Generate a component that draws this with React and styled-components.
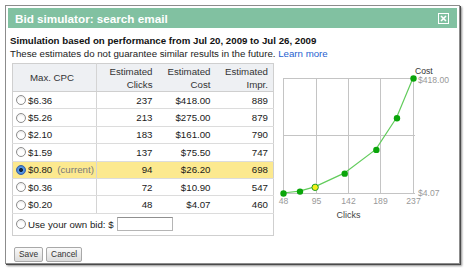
import React from "react";
import styled, { createGlobalStyle } from "styled-components";

const GlobalStyle = createGlobalStyle`
  body {
    margin: 0;
    background: #fff;
    font-family: "Liberation Sans", Arial, sans-serif;
    color: #222;
  }
`;

const Dialog = styled.div`
  box-sizing: border-box;
  margin: 5px;
  width: 455px;
  height: 259px;
  padding: 2px;
  background: #fff;
  border: 1px solid #8c8c8c;
  box-shadow: 1px 1px 0 #4a4a4a, 2px 2px 2px rgba(0, 0, 0, 0.45);
`;

const TitleBar = styled.div`
  display: flex;
  align-items: center;
  justify-content: space-between;
  height: 20px;
  padding: 0 8px 0 7px;
  background: #81c1a1;
`;

const Title = styled.span`
  color: #fff;
  font-weight: bold;
  font-size: 11.7px;
`;

const Body = styled.div`
  padding: 6px 0 0 2px;
`;

const Heading = styled.div`
  font-size: 9.7px;
  font-weight: bold;
  line-height: 13px;
  color: #111;
`;

const Note = styled.div`
  font-size: 9.7px;
  line-height: 13px;
  color: #222;
`;

const Link = styled.a`
  color: #1f5fcf;
  text-decoration: none;
`;

const Content = styled.div`
  display: flex;
  align-items: flex-start;
  margin: 3px 0 0 2px;
`;

const SimTable = styled.table`
  border-collapse: collapse;
  table-layout: fixed;
  width: 261px;
  font-size: 9.7px;
  border: 1px solid #cfcfcf;
`;

const HeadCell = styled.th`
  height: 27px;
  padding: 0 5px 0 0;
  font-weight: normal;
  line-height: 13px;
  color: #333;
  background: #eef0f3;
  text-align: ${(p) => (p.$center ? "center" : "right")};
  border-bottom: 1px solid #cfcfcf;
  border-right: ${(p) => (p.$split ? "1px solid #d4d4d4" : "none")};
`;

const Row = styled.tr`
  background: ${(p) => (p.$current ? "#fce98f" : "#fff")};
`;

const Cell = styled.td`
  height: 16.4px;
  padding: 0 5px 0 0;
  text-align: right;
  color: #1a1a1a;
  border-bottom: 1px solid #dcdcdc;
  border-right: ${(p) => (p.$split ? "1px solid #d4d4d4" : "none")};
`;

const BidCell = styled.td`
  height: 16.4px;
  padding: 0 0 0 3px;
  border-bottom: 1px solid #dcdcdc;
  border-right: 1px solid #d4d4d4;
`;

const OwnCell = styled.td`
  height: 21px;
  padding: 0 0 0 3px;
`;

const Choice = styled.label`
  display: flex;
  align-items: center;
  gap: 2px;
  color: #1a1a1a;
  white-space: nowrap;
`;

const Radio = styled.span`
  box-sizing: border-box;
  width: 10px;
  height: 10px;
  border-radius: 50%;
  border: 1px solid ${(p) => (p.$checked ? "#3a64a8" : "#8e8e8e")};
  background: ${(p) =>
    p.$checked
      ? "radial-gradient(circle, #10213c 0 1.6px, #5b9be6 2.4px, #2f6bc4 100%)"
      : "radial-gradient(circle at 50% 70%, #fff 0 40%, #e2e2e2 100%)"};
  flex: none;
`;

const Muted = styled.span`
  color: #7a7a7a;
  margin-left: 3px;
`;

const BidInput = styled.span`
  display: inline-block;
  box-sizing: border-box;
  width: 56px;
  height: 14px;
  margin-left: 1px;
  border: 1px solid #b5b5b5;
  border-top-color: #8f8f8f;
  background: #fff;
`;

const Actions = styled.div`
  display: flex;
  gap: 3px;
  margin: 11px 0 0 4px;
`;

const Button = styled.button`
  box-sizing: border-box;
  height: 15px;
  padding: 0 4px;
  font-family: "Liberation Sans", Arial, sans-serif;
  font-size: 8.4px;
  color: #333;
  border: 1px solid #a8a8a8;
  border-radius: 2px;
  background: linear-gradient(#fafafa, #dcdcdc);
`;

const rows = [
  { bid: "$6.36", clicks: 237, cost: "$418.00", impr: 889 },
  { bid: "$5.26", clicks: 213, cost: "$275.00", impr: 879 },
  { bid: "$2.10", clicks: 183, cost: "$161.00", impr: 790 },
  { bid: "$1.59", clicks: 137, cost: "$75.50", impr: 747 },
  { bid: "$0.80", clicks: 94, cost: "$26.20", impr: 698, current: true },
  { bid: "$0.36", clicks: 72, cost: "$10.90", impr: 547 },
  { bid: "$0.20", clicks: 48, cost: "$4.07", impr: 460 },
];

const points = [
  [48, 4.07],
  [72, 10.9],
  [94, 26.2, true],
  [137, 75.5],
  [183, 161],
  [213, 275],
  [237, 418],
];

const px = (c) => 9 + ((c - 48) * 130) / 189;
const py = (v) => 130 - ((v - 4.07) * 115) / 413.93;

const CloseIcon = () => (
  <svg width="11" height="11" viewBox="0 0 11 11">
    <rect x="0.5" y="0.5" width="10" height="10" fill="none" stroke="#fff" />
    <path d="M3 3 L8 8 M8 3 L3 8" stroke="#fff" strokeWidth="1.6" />
  </svg>
);

const Chart = () => {
  const grid = [9, 42, 74, 106, 139];
  const labels = ["48", "95", "142", "189", "237"];
  const line = points.map(([c, v]) => `${px(c)},${py(v)}`).join(" ");
  return (
    <svg width="182" height="160" style={{ flex: "none" }}>
      <g stroke="#c4c4c4" strokeWidth="1">
        {grid.map((x) => (
          <line key={x} x1={x + 0.5} y1="15" x2={x + 0.5} y2="130.5" />
        ))}
        <line x1="9" y1="15.5" x2="140" y2="15.5" />
        <line x1="9" y1="72.5" x2="141" y2="72.5" />
        <line x1="9" y1="130.5" x2="141" y2="130.5" />
      </g>
      <polyline points={line} fill="none" stroke="#62cc5c" strokeWidth="1.2" />
      {points.map(([c, v, cur]) => (
        <circle
          key={c}
          cx={px(c) + 0.5}
          cy={py(v) + 0.5}
          r="3.2"
          fill={cur ? "#f5ee1a" : "#0aa50a"}
          stroke={cur ? "#1e9e1e" : "none"}
          strokeWidth="1"
        />
      ))}
      <g fontFamily="Liberation Sans, Arial, sans-serif" fontSize="8.6" fill="#999">
        {labels.map((t, i) => (
          <text key={t} x={grid[i] + 0.5} y="141" textAnchor="middle">
            {t}
          </text>
        ))}
        <text x="144" y="133">$4.07</text>
        <text x="144" y="20">$418.00</text>
      </g>
      <text x="141" y="11" fontFamily="Liberation Sans, Arial, sans-serif" fontSize="8.6" fill="#333">
        Cost
      </text>
      <text x="74.5" y="155" textAnchor="middle" fontFamily="Liberation Sans, Arial, sans-serif" fontSize="9" fill="#444">
        Clicks
      </text>
    </svg>
  );
};

export default function App() {
  return (
    <>
      <GlobalStyle />
      <Dialog>
        <TitleBar>
          <Title>Bid simulator: search email</Title>
          <CloseIcon />
        </TitleBar>
        <Body>
          <Heading>Simulation based on performance from Jul 20, 2009 to Jul 26, 2009</Heading>
          <Note>
            These estimates do not guarantee similar results in the future. <Link href="#">Learn more</Link>
          </Note>
          <Content>
            <SimTable>
              <colgroup>
                <col style={{ width: 84 }} />
                <col style={{ width: 61 }} />
                <col style={{ width: 58 }} />
                <col style={{ width: 58 }} />
              </colgroup>
              <thead>
                <tr>
                  <HeadCell $center $split>Max. CPC</HeadCell>
                  <HeadCell>Estimated<br />Clicks</HeadCell>
                  <HeadCell>Estimated<br />Cost</HeadCell>
                  <HeadCell>Estimated<br />Impr.</HeadCell>
                </tr>
              </thead>
              <tbody>
                {rows.map((r) => (
                  <Row key={r.bid} $current={r.current}>
                    <BidCell>
                      <Choice>
                        <Radio $checked={r.current} />
                        {r.bid}
                        {r.current && <Muted>(current)</Muted>}
                      </Choice>
                    </BidCell>
                    <Cell>{r.clicks}</Cell>
                    <Cell>{r.cost}</Cell>
                    <Cell>{r.impr}</Cell>
                  </Row>
                ))}
                <tr>
                  <OwnCell colSpan={4}>
                    <Choice>
                      <Radio />
                      Use your own bid: $<BidInput />
                    </Choice>
                  </OwnCell>
                </tr>
              </tbody>
            </SimTable>
            <Chart />
          </Content>
          <Actions>
            <Button>Save</Button>
            <Button>Cancel</Button>
          </Actions>
        </Body>
      </Dialog>
    </>
  );
}
